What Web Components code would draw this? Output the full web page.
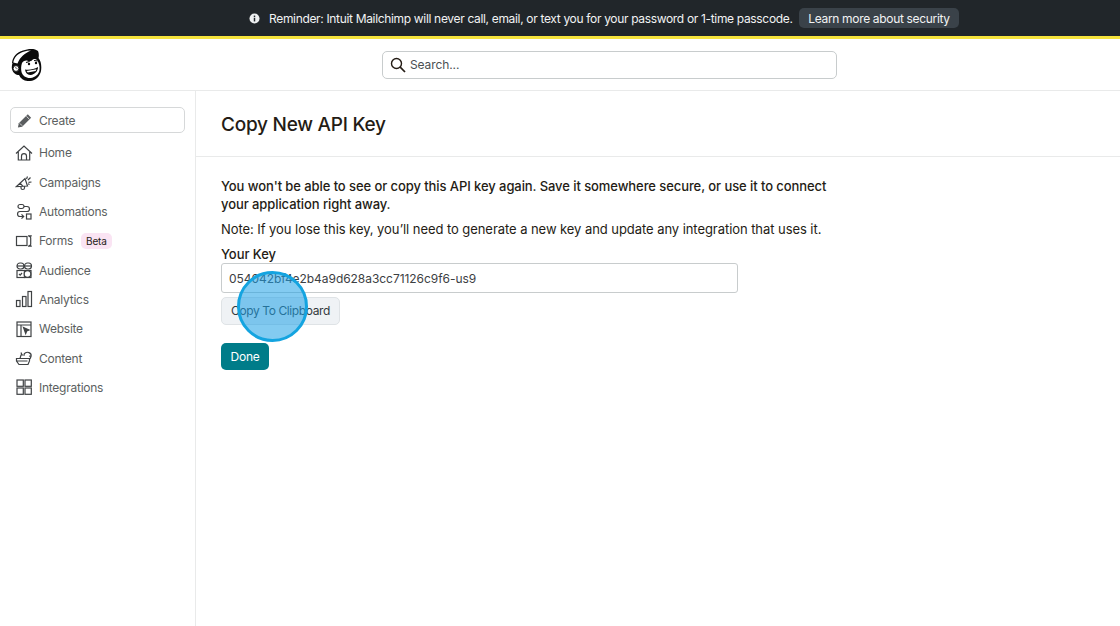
<!DOCTYPE html>
<html lang="en"><head><meta charset="utf-8"><title>Copy New API Key</title>
<style>
html,body{margin:0;height:100%;background:#fff}
body{font-family:Inter,"Liberation Sans",sans-serif;color:#241c15;overflow:hidden}
app-shell{height:626px}
</style></head><body>
<app-shell>
  <app-banner slot="banner">Reminder: Intuit Mailchimp will never call, email, or text you for your password or 1-time passcode.</app-banner>
  <app-header slot="header"></app-header>
  <side-nav slot="nav"></side-nav>
  <key-panel slot="main"></key-panel>
</app-shell>
<script>
const def=(name,html,init)=>customElements.define(name,class extends HTMLElement{
  constructor(){super();this.attachShadow({mode:'open'}).innerHTML=html;}
  connectedCallback(){init&&init.call(this,this.shadowRoot);}
});
def('app-shell',`<style>
:host{display:grid;grid-template-rows:39px 52px 1fr;grid-template-columns:196px 1fr;width:1120px}
.b{grid-column:1/3}
</style>
<div class="b"><slot name="banner"></slot></div>
<div class="b"><slot name="header"></slot></div>
<slot name="nav"></slot><slot name="main"></slot>`);
def('app-banner',`<style>
:host{display:flex;box-sizing:border-box;height:39px;background:#21262a;border-bottom:3px solid #f5e33c;align-items:center;color:#f2f3f3;font-size:12px;letter-spacing:-.33px;padding-left:249px}
svg{width:11px;height:11px;margin-right:9px;flex:none}
span{width:530px;white-space:nowrap}
a{background:#3a4249;border-radius:5px;height:20px;width:160px;display:flex;align-items:center;justify-content:center;color:#f2f3f3}
</style>
<svg viewBox="0 0 12 12"><circle cx="6" cy="6" r="5.500" fill="#eef0f1"/><rect x="5.200" y="2.800" width="1.600" height="1.600" fill="#21262a"/><rect x="5.200" y="5.200" width="1.600" height="4" fill="#21262a"/></svg>
<span><slot></slot></span><a>Learn more about security</a>`);
def('app-header',`<style>
:host{display:flex;box-sizing:border-box;height:52px;border-bottom:1px solid #e9eaea;align-items:center;padding:0 0 0 11px}
.logo{width:31px;height:33px;margin-right:340px;flex:none}
.s{box-sizing:border-box;width:455px;height:28px;border:1px solid #c8cccd;border-radius:5px;display:flex;align-items:center;padding-left:7px;gap:4px;font-size:12px;letter-spacing:-.1px;color:#4a4f52}
svg.i{width:16px;height:16px}
</style>
<svg class="logo" viewBox="0 0 31 33">
<path d="M1 15C1.500 9 6 4 12 2.500 17 .5 24 0 27 3c1 2 1 5 .5 7 2.500 3 3.300 8 2.500 13-1 5-5 9.500-11 10-5 .4-9-1.500-11-6-3 0-6-2-7-6-.5-2 0-4 .5-6z" fill="#0a0a0a"/>
<path d="M2.300 14.500C3 9.500 7 5.500 12.500 3.800 15 3 17.500 2.500 20 2.500 14 5 9 9 6.500 15.500 5 15 3.500 14.800 2.300 14.500z" fill="#fff"/>
<circle cx="5" cy="20.500" r="2.900" fill="#fff" stroke="#0a0a0a" stroke-width=".9"/>
<path d="M4 20c1-.8 2 0 2 1.200" fill="none" stroke="#0a0a0a" stroke-width=".7"/>
<path d="M11 15c2-2.500 4-3 6-2 1.500.6 3 .6 4-.8 1.500-1.700 3.500-1.700 5-.2 2 2.500 3 6.500 2.500 10-.5 4-4 7.500-9 8-4 .3-8-2-9-6-.6-3-.5-6 .5-9z" fill="#fff"/>
<path d="M14 21.500c4 .6 9 0 13-2.500 0 4-3 7.500-7.500 8-3 .2-5-2-5.500-5.500z" fill="#0a0a0a"/>
<path d="M15.500 23l10-1.800-.8 1.700-8 1.500z" fill="#fff"/>
<circle cx="18" cy="16" r="1.200" fill="#0a0a0a"/><circle cx="25" cy="15" r="1.200" fill="#0a0a0a"/>
<path d="M15 14.500l3.500-1M23 12.500l3.500 .5" stroke="#0a0a0a" stroke-width="1.100" fill="none"/>
</svg>
<div class="s"><svg class="i" viewBox="0 0 16 16" fill="none" stroke="#241c15" stroke-width="1.400"><circle cx="6.500" cy="6.500" r="5"/><path d="M10.200 10.200L15 15" stroke-width="1.700"/></svg><span>Search...</span></div>`);
const icons={
home:'<path d="M1 9.500L9 2l8 7.500M3.300 8v8h11.400V8M6.500 16v-4c0-3.300 5-3.300 5 0v4"/>',
camp:'<path d="M1.500 13.500L10 5.500l2.500 7.500zM6 13.500v1.500c0 2 3.500 2 3.500 0v-1.700M5 10l3 3.300"/><path d="M12.500 3.500l-1 2.500M15.500 4.500l-2.500 2.500M16.500 9l-3 .3M14.500 11.500l-1.500-.7"/>',
auto:'<rect x="3" y="1.500" width="6" height="4" rx="2"/><path d="M9 3.500h3c3.300 0 3.300 5 0 5H5c-3.300 0-3.300 5 0 5h3.500M6.500 11.300l2.200 2.200-2.200 2.200"/><rect x="11.500" y="11" width="4.500" height="5"/>',
forms:'<rect x="1.500" y="4.500" width="10.500" height="9"/><path d="M14 4.500c1.200 0 1.700.6 1.700 1.300v6.400c0 .7-.5 1.300-1.700 1.300M13 3.800h3.800M13 14.200h3.800"/>',
aud:'<rect x="2" y="9.500" width="7.500" height="7"/><rect x="9.500" y="9.500" width="6.500" height="7"/><rect x="2" y="2" width="7" height="6" rx="3"/><rect x="9.500" y="2" width="7" height="6" rx="3"/><path d="M2 5h14"/><circle cx="12.500" cy="13" r="3.300" fill="#fff"/><path d="M4 13l1.200 1.200L7 12"/>',
ana:'<rect x="1.500" y="10.500" width="3.500" height="6"/><rect x="7.500" y="6.500" width="3.500" height="10"/><rect x="13" y="1.500" width="3.500" height="15"/>',
web:'<rect x="2" y="2" width="14" height="14.500"/><path d="M2 5h14M6 5v11.500"/><path d="M8.500 7.500l5.500 2.500-2.300 1-1 2.500z" fill="#3f4244"/>',
cont:'<path d="M1.500 9.500h13v2.500l-1.500 3.500H4L1.500 12zM1.500 12h11"/><path d="M5 9.500l1-3.500h4M9 5c3-3.500 8-1 7 2.500-.4 1.500-1 2.500-2 3M6 3.500l1 2.500M14 7l2 .5"/>',
integ:'<rect x="2" y="2" width="6.300" height="6.300"/><rect x="10" y="2" width="6.300" height="6.300"/><rect x="2" y="10" width="6.300" height="6.300"/><rect x="10" y="10" width="6.300" height="6.300"/>'
};
customElements.define('nav-item',class extends HTMLElement{
  constructor(){super();const r=this.attachShadow({mode:'open'});
  r.innerHTML=`<style>
  :host{display:flex;align-items:center;height:29.300px;padding-left:5px;gap:6px;font-size:12px;letter-spacing:-.25px;color:#5c5f61}
  svg{width:18px;height:18px;flex:none;fill:none;stroke:#3f4244;stroke-width:1.200}
  ::slotted(beta-tag){margin-left:2px}
  </style><svg viewBox="0 0 18 18"></svg><slot></slot><slot name="tag"></slot>`;}
  connectedCallback(){this.shadowRoot.querySelector('svg').innerHTML=icons[this.getAttribute('icon')];}
});
def('beta-tag',`<style>:host{display:inline-flex;align-items:center;height:16px;padding:0 5px;background:#fae4f3;border-radius:5px;font-size:10px;letter-spacing:-.2px;color:#241c15}</style><slot></slot>`);
def('side-nav',`<style>
:host{display:block;box-sizing:border-box;border-right:1px solid #e9eaea;height:535px;padding:16px 10px 0 10px}
.c{box-sizing:border-box;height:26px;border:1px solid #d6d8d9;border-radius:5px;display:flex;align-items:center;padding-left:5px;gap:6px;font-size:12px;letter-spacing:-.25px;color:#5c5f61;margin-bottom:5.300px}
.c svg{width:17px;height:17px;fill:#5a5d5f}
</style>
<div class="c"><svg viewBox="0 0 18 18"><path d="M2 16.500l1-4.500L12.500 2.500l3.500 3.500L6.500 15.500z"/><path d="M4 12l2.500 2.500M11 4.500l3 3" stroke="#fff" stroke-width=".8"/></svg><span>Create</span></div>
<nav-item icon="home">Home</nav-item>
<nav-item icon="camp">Campaigns</nav-item>
<nav-item icon="auto">Automations</nav-item>
<nav-item icon="forms">Forms<beta-tag slot="tag">Beta</beta-tag></nav-item>
<nav-item icon="aud">Audience</nav-item>
<nav-item icon="ana">Analytics</nav-item>
<nav-item icon="web">Website</nav-item>
<nav-item icon="cont">Content</nav-item>
<nav-item icon="integ">Integrations</nav-item>`);
def('key-panel',`<style>
:host{display:block;position:relative;color:#241c15}
header{box-sizing:border-box;height:66px;border-bottom:1px solid #e9eaea;padding:2px 25px 0;display:flex;align-items:center}
h1{margin:0;font-size:19px;font-weight:500;letter-spacing:-.25px}
.b{padding:20px 25px 0;width:620px;font-size:13px;line-height:18px;letter-spacing:-.06px}
p{margin:0}
.s{font-weight:500;margin-bottom:7px;letter-spacing:-.08px}
label{display:block;font-weight:500;margin-top:7px;height:18px}
.k{box-sizing:border-box;width:517px;height:30px;border:1px solid #c8cccd;border-radius:3px;display:flex;align-items:center;padding:2px 0 0 7px;font-size:12px;letter-spacing:-.05px;color:#3c4043}
.cp{box-sizing:border-box;margin-top:4px;width:119px;height:28px;border:1px solid #dfe3e6;background:#eff2f5;border-radius:5px;display:flex;align-items:center;justify-content:center;font-size:12px;letter-spacing:-.4px;color:#33393d}
.d{margin-top:18px;width:48px;height:27px;background:#007c89;color:#fff;border-radius:5px;display:flex;align-items:center;justify-content:center;font-size:12px;letter-spacing:-.2px}
.spot{position:absolute;left:41px;top:180px;width:71px;height:71px;box-sizing:border-box;border-radius:50%;border:3px solid #14a4e0;background:rgba(30,160,230,.55)}
</style>
<header><h1>Copy New API Key</h1></header>
<div class="b">
<p class="s">You won't be able to see or copy this API key again. Save it somewhere secure, or use it to connect your application right away.</p>
<p>Note: If you lose this key, you’ll need to generate a new key and update any integration that uses it.</p>
<label>Your Key</label>
<div class="k">054042bf4e2b4a9d628a3cc71126c9f6-us9</div>
<div class="cp">Copy To Clipboard</div>
<div class="d">Done</div>
</div>
<div class="spot"></div>`);
</script>
</body></html>
